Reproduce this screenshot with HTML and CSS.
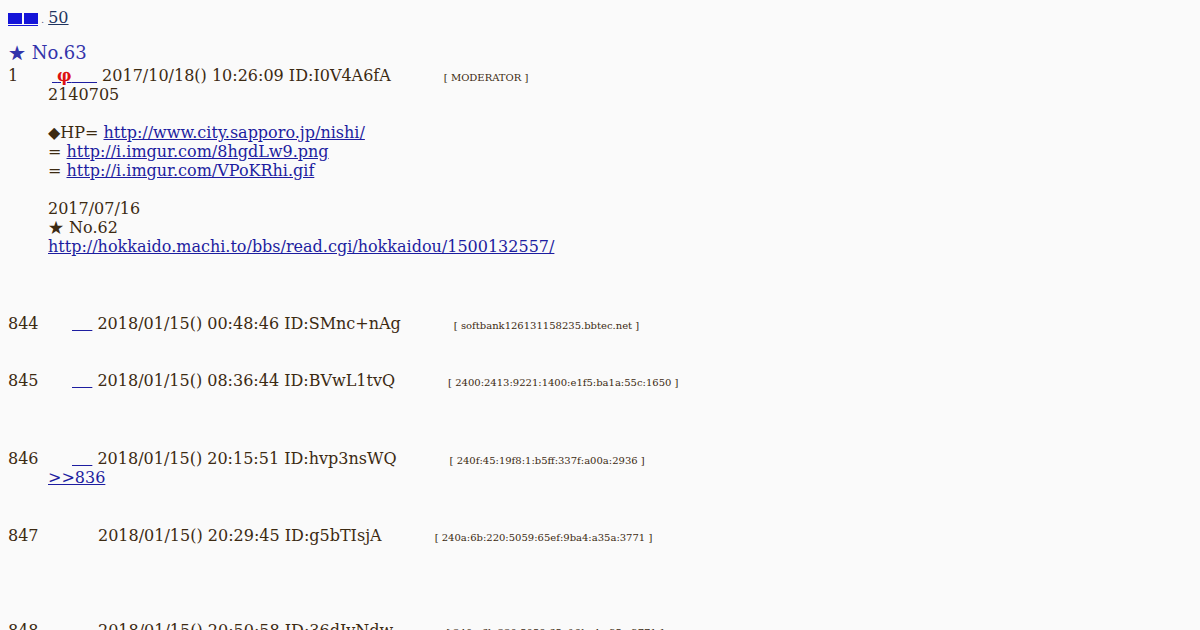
FILE: index.html
```html
<!DOCTYPE html>
<html lang="ja">
<head>
    <meta charset="UTF-8">
    <title>No.63</title>
    <link rel="stylesheet" href="styles.css">
</head>
<body>
    <div class="nav">
        <a href="#" class="home"><span class="sq"></span><span class="sq"></span></a><span class="dot">.</span><a href="#" class="last">50</a>
    </div>

    <h1 class="title">★ No.63</h1>

    <dl class="thread">
        <dt><span class="num">1</span><a href="#" class="name first">&nbsp;<b>φ</b>&nbsp;&nbsp;&nbsp;&nbsp;&nbsp;</a> 2017/10/18() 10:26:09 ID:I0V4A6fA<span class="host">[ MODERATOR ]</span></dt>
        <dd class="body-first">
            2140705<br>
            <br>
            ◆HP= <a href="#">http://www.city.sapporo.jp/nishi/</a><br>
            = <a href="#">http://i.imgur.com/8hgdLw9.png</a><br>
            = <a href="#">http://i.imgur.com/VPoKRhi.gif</a><br>
            <br>
            2017/07/16<br>
            ★ No.62<br>
            <a href="#">http://hokkaido.machi.to/bbs/read.cgi/hokkaidou/1500132557/</a><br>
            <br>
            <br>
            <br>
        </dd>

        <dt><span class="num">844</span><a href="#" class="name">&nbsp;&nbsp;&nbsp;&nbsp;</a> 2018/01/15() 00:48:46 ID:SMnc+nAg<span class="host">[ softbank126131158235.bbtec.net ]</span></dt>
        <dd><br><br></dd>

        <dt><span class="num">845</span><a href="#" class="name">&nbsp;&nbsp;&nbsp;&nbsp;</a> 2018/01/15() 08:36:44 ID:BVwL1tvQ<span class="host">[ 2400:2413:9221:1400:e1f5:ba1a:55c:1650 ]</span></dt>
        <dd class="body-gap wide"><br><br><br></dd>

        <dt><span class="num">846</span><a href="#" class="name">&nbsp;&nbsp;&nbsp;&nbsp;</a> 2018/01/15() 20:15:51 ID:hvp3nsWQ<span class="host">[ 240f:45:19f8:1:b5ff:337f:a00a:2936 ]</span></dt>
        <dd class="body-gap"><a href="#">&gt;&gt;836</a><br><br><br></dd>

        <dt><span class="num">847</span><span class="anon"></span>2018/01/15() 20:29:45 ID:g5bTIsjA<span class="host">[ 240a:6b:220:5059:65ef:9ba4:a35a:3771 ]</span></dt>
        <dd><br><br><br><br></dd>

        <dt><span class="num">848</span><span class="anon"></span>2018/01/15() 20:50:58 ID:36dIyNdw<span class="host">[ 240a:6b:220:5059:65ef:9ba4:a35a:3771 ]</span></dt>
    </dl>
</body>
</html>
```

FILE: styles.css
```css
body {
    margin: 8px;
    background-color: #fafafa;
    color: #3c2a12;
    font-family: "DejaVu Serif", serif;
    font-size: 16px;
    line-height: 19px;
}
a {
    color: #1d1da0;
}
.nav {
    height: 19px;
}
.home {
    display: inline-block;
    border-bottom: 1px solid #1414d8;
    height: 17px;
    vertical-align: top;
}
.sq {
    display: inline-block;
    width: 14px;
    height: 11px;
    margin-top: 5px;
    margin-right: 2px;
    background-color: #1414d8;
    vertical-align: top;
}
.sq:last-child {
    margin-right: 0;
}
.dot {
    font-size: 10px;
    line-height: 0;
    color: #5a6488;
    margin: 0 4px 0 3px;
}
.last {
    color: #1f3560;
}
.title {
    margin: 15px 0 0 0;
    font-size: 18px;
    font-weight: normal;
    line-height: 22px;
    color: #3333aa;
}
.thread {
    margin: 2px 0 0 0;
}
.thread dt {
    white-space: nowrap;
    height: 19px;
}
.thread dd {
    margin: 0 0 0 40px;
}
.body-first {
    padding-bottom: 1px;
}
.body-gap {
    padding-bottom: 1px;
}
.body-gap.wide {
    padding-bottom: 2px;
}
.num {
    display: inline-block;
    width: 40px;
}
.name {
    margin-left: 24px;
    text-decoration-color: #1d1da0;
}
.name.first {
    margin-left: 4px;
}
.name b {
    color: #dd1111;
}
.anon {
    display: inline-block;
    width: 50px;
}
.host {
    margin-left: 53px;
    font-size: 10px;
    line-height: 0;
}
```
